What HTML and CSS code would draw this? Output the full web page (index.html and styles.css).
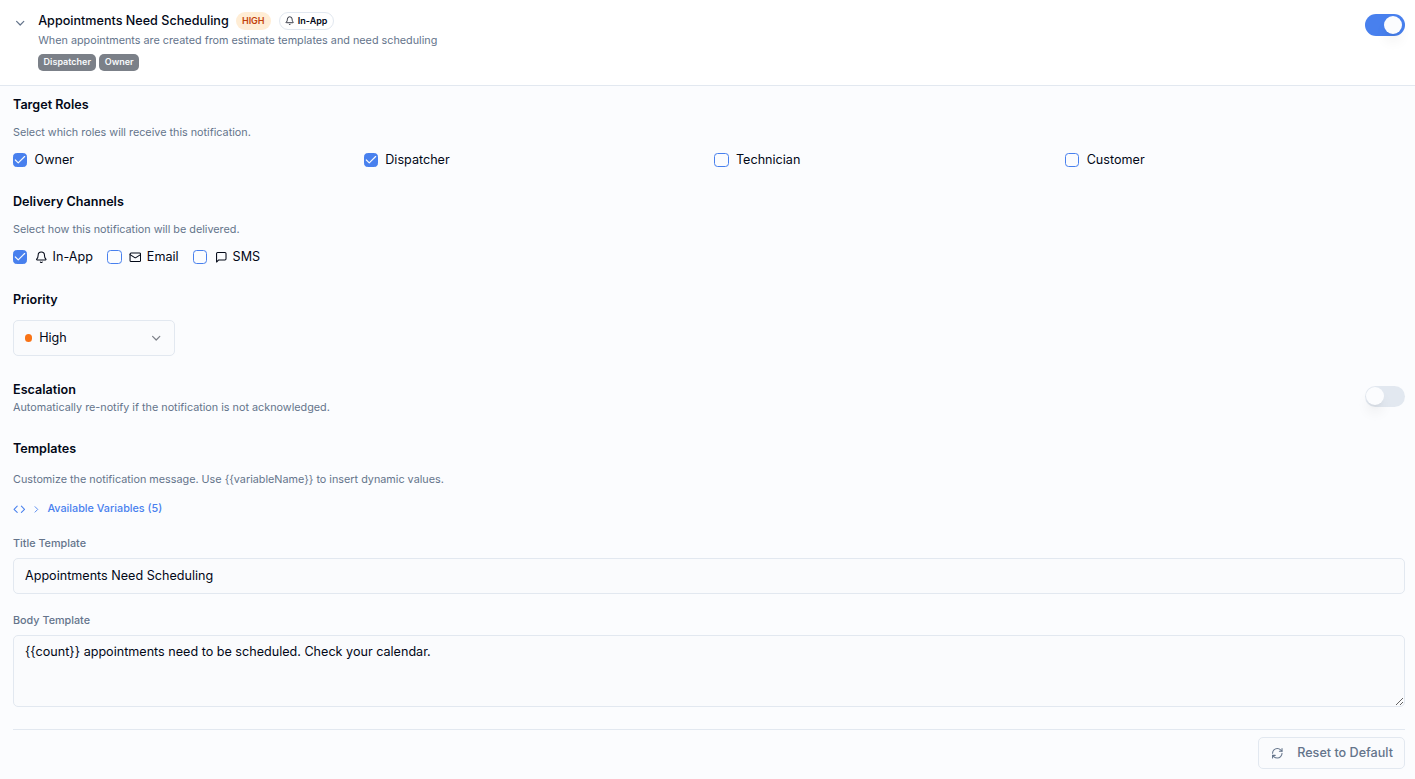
FILE: index.html
```html
<!DOCTYPE html>
<html lang="en">
<head>
  <meta charset="UTF-8">
  <meta name="viewport" content="width=device-width, initial-scale=1.0">
  <title>Notification Settings</title>
  <link rel="stylesheet" href="styles.css">
</head>
<body>
  <!-- Shared icons -->
  <svg class="icon-defs">
    <symbol id="icon-bell" viewBox="0 0 24 24">
      <path d="M10.268 21a2 2 0 0 0 3.464 0"/>
      <path d="M3.262 15.326A1 1 0 0 0 4 17h16a1 1 0 0 0 .74-1.673C19.41 13.956 18 12.499 18 8A6 6 0 0 0 6 8c0 4.499-1.411 5.956-2.738 7.326"/>
    </symbol>
    <symbol id="icon-chevron" viewBox="0 0 24 24">
      <path d="m6 9 6 6 6-6"/>
    </symbol>
  </svg>

  <header class="rule-header">
    <svg class="icon toggle-arrow"><use href="#icon-chevron"/></svg>
    <div class="rule-info">
      <div class="rule-title">
        <h1>Appointments Need Scheduling</h1>
        <span class="badge badge-high">HIGH</span>
        <span class="badge badge-outline"><svg class="icon"><use href="#icon-bell"/></svg>In-App</span>
      </div>
      <p class="hint">When appointments are created from estimate templates and need scheduling</p>
      <div class="role-badges">
        <span class="role-badge">Dispatcher</span>
        <span class="role-badge">Owner</span>
      </div>
    </div>
    <button class="switch on" role="switch" aria-checked="true" aria-label="Enabled"><span></span></button>
  </header>

  <main class="rule-body">
    <!-- Target Roles -->
    <section class="section">
      <h2>Target Roles</h2>
      <p class="hint">Select which roles will receive this notification.</p>
      <div class="roles">
        <label class="check"><input type="checkbox" checked>Owner</label>
        <label class="check"><input type="checkbox" checked>Dispatcher</label>
        <label class="check"><input type="checkbox">Technician</label>
        <label class="check"><input type="checkbox">Customer</label>
      </div>
    </section>

    <!-- Delivery Channels -->
    <section class="section delivery">
      <h2>Delivery Channels</h2>
      <p class="hint">Select how this notification will be delivered.</p>
      <div class="channels">
        <label class="check"><input type="checkbox" checked><svg class="icon"><use href="#icon-bell"/></svg>In-App</label>
        <label class="check"><input type="checkbox">
          <svg class="icon" viewBox="0 0 24 24"><rect x="2" y="4" width="20" height="16" rx="2"/><path d="m22 7-8.97 5.7a1.94 1.94 0 0 1-2.06 0L2 7"/></svg>Email</label>
        <label class="check"><input type="checkbox">
          <svg class="icon" viewBox="0 0 24 24"><path d="M21 15a2 2 0 0 1-2 2H7l-4 4V5a2 2 0 0 1 2-2h14a2 2 0 0 1 2 2z"/></svg>SMS</label>
      </div>
    </section>

    <!-- Priority -->
    <section class="section">
      <h2>Priority</h2>
      <button class="select">
        <span class="dot"></span>High
        <svg class="icon"><use href="#icon-chevron"/></svg>
      </button>
    </section>

    <!-- Escalation -->
    <section class="escalation">
      <div>
        <h2>Escalation</h2>
        <p class="hint">Automatically re-notify if the notification is not acknowledged.</p>
      </div>
      <button class="switch" role="switch" aria-checked="false" aria-label="Escalation"><span></span></button>
    </section>

    <!-- Templates -->
    <section class="templates">
      <h2>Templates</h2>
      <p class="hint">Customize the notification message. Use {{variableName}} to insert dynamic values.</p>
      <button class="variables">
        <svg class="icon code" viewBox="0 0 24 24"><path d="m16 18 6-6-6-6"/><path d="m8 6-6 6 6 6"/></svg>
        <svg class="icon arrow" viewBox="0 0 24 24"><path d="m9 18 6-6-6-6"/></svg>
        Available Variables (5)
      </button>
      <label class="field-label" for="titleTemplate">Title Template</label>
      <input class="field" type="text" id="titleTemplate" value="Appointments Need Scheduling">
      <label class="field-label" for="bodyTemplate">Body Template</label>
      <textarea class="field" id="bodyTemplate">{{count}} appointments need to be scheduled. Check your calendar.</textarea>
    </section>

    <footer class="actions">
      <button class="reset">
        <svg class="icon" viewBox="0 0 24 24"><path d="M3 12a9 9 0 0 1 9-9 9.75 9.75 0 0 1 6.74 2.74L21 8"/><path d="M21 3v5h-5"/><path d="M21 12a9 9 0 0 1-9 9 9.75 9.75 0 0 1-6.74-2.74L3 16"/><path d="M8 16H3v5"/></svg>
        Reset to Default
      </button>
    </footer>
  </main>
</body>
</html>
```
FILE: styles.css
```css
* {
  box-sizing: border-box;
}
body {
  margin: 0;
  font-family: Inter, sans-serif;
  font-size: 12.6px;
  line-height: 18px;
  color: #020817;
  background: #fbfcfe;
}
h1, h2, p {
  margin: 0;
}
h1, h2 {
  font-size: 12.6px;
  font-weight: 500;
  line-height: 18px;
}
h2 {
  font-weight: 600;
}
button, input, textarea {
  font: inherit;
  color: inherit;
}
button {
  padding: 0;
  border: none;
  background: none;
  cursor: pointer;
}
.icon-defs {
  display: none;
}
.icon {
  width: 12.6px;
  height: 12.6px;
  flex-shrink: 0;
  fill: none;
  stroke: currentColor;
  stroke-width: 2;
  stroke-linecap: round;
  stroke-linejoin: round;
}
.hint {
  font-size: 10.8px;
  line-height: 14px;
  color: #64748b;
}

/* Header */
.rule-header {
  display: flex;
  align-items: flex-start;
  height: 86px;
  padding: 12px 10px 0 13px;
  background: #fff;
  border-bottom: 1px solid #e2e8f0;
}
.toggle-arrow {
  width: 14.4px;
  height: 14.4px;
  margin-top: 4px;
  color: #64748b;
}
.rule-info {
  flex: 1;
  margin-left: 10.8px;
}
.rule-title {
  display: flex;
  align-items: center;
  height: 18px;
}
.rule-header .hint {
  margin-top: 4px;
}
.badge {
  display: flex;
  align-items: center;
  height: 18px;
  border-radius: 9px;
  font-size: 9px;
  font-weight: 600;
}
.badge-high {
  margin-left: 7.2px;
  padding: 0 6px;
  color: #c2410c;
  background: #ffedd5;
}
.badge-outline {
  margin-left: 8px;
  padding: 0 5.5px;
  gap: 3.2px;
  border: 1px solid #e2e8f0;
}
.badge-outline .icon {
  width: 9.5px;
  height: 9.5px;
}
.role-badges {
  display: flex;
  gap: 3px;
  margin-top: 6px;
}
.role-badge {
  height: 17px;
  padding: 0 5.4px;
  border-radius: 5px;
  font-size: 9px;
  font-weight: 600;
  line-height: 16px;
  color: #f8fafc;
  background: #7b8088;
}

/* Switch */
.switch {
  display: flex;
  align-items: center;
  width: 40px;
  height: 21.6px;
  padding: 0 3px 0 1px;
  border-radius: 11px;
  background: #e2e8f0;
}
.switch span {
  width: 18px;
  height: 18px;
  border-radius: 50%;
  background: #fbfcfe;
  box-shadow: 0 9px 14px -3px rgba(0, 0, 0, 0.1), 0 4px 5px -4px rgba(0, 0, 0, 0.1);
}
.switch.on {
  justify-content: flex-end;
  background: #4880ee;
}
.rule-header .switch {
  margin-top: 2px;
}

/* Body */
.rule-body {
  padding: 10px 10px 0 13px;
}
.section {
  margin-bottom: 24px;
}
.section.delivery {
  margin-bottom: 25px;
}
.section .hint {
  margin-top: 12px;
}
.roles {
  display: grid;
  grid-template-columns: repeat(4, 1fr);
  gap: 10.8px;
  margin-top: 11px;
}
.channels {
  display: flex;
  gap: 14.4px;
  margin-top: 11px;
}
.check {
  display: flex;
  align-items: center;
  height: 18px;
}
.check input {
  appearance: none;
  width: 14.4px;
  height: 14.4px;
  margin: 0 7.2px 0 0;
  border: 1px solid #4880ee;
  border-radius: 3.6px;
}
.check input:checked {
  background: #4880ee url("data:image/svg+xml,%3Csvg xmlns='http://www.w3.org/2000/svg' viewBox='0 0 24 24' fill='none' stroke='%23f8fafc' stroke-width='2' stroke-linecap='round' stroke-linejoin='round'%3E%3Cpath d='M20 6 9 17l-5-5'/%3E%3C/svg%3E") center / 14.4px no-repeat;
}
.check .icon {
  margin-right: 5.4px;
}
.select {
  display: flex;
  align-items: center;
  width: 162px;
  height: 36px;
  margin-top: 11px;
  padding: 0 11px;
  border: 1px solid #e2e8f0;
  border-radius: 5px;
  background: #fafbfd;
}
.dot {
  width: 7.2px;
  height: 7.2px;
  margin-right: 7px;
  border-radius: 50%;
  background: #f97316;
}
.select .icon {
  width: 14.4px;
  height: 14.4px;
  margin-left: auto;
  opacity: 0.5;
}
.escalation {
  display: flex;
  align-items: flex-start;
  justify-content: space-between;
  height: 35px;
  padding-top: 1px;
  margin-bottom: 25px;
}
.escalation .hint {
  margin-top: 2px;
}
.escalation .switch {
  margin-top: 4.7px;
}

/* Templates */
.templates {
  display: flex;
  flex-direction: column;
}
.templates .hint {
  margin-top: 15px;
}
.variables {
  display: flex;
  align-items: center;
  height: 18px;
  margin-top: 13px;
  font-size: 10.8px;
  font-weight: 500;
  color: #4880ee;
}
.variables .code {
  margin-right: 5px;
}
.variables .arrow {
  width: 10.8px;
  height: 10.8px;
  margin-right: 6px;
}
.field-label {
  margin: 18px 0 6px;
  font-size: 10.8px;
  font-weight: 500;
  line-height: 16px;
  color: #64748b;
}
.field + .field-label {
  margin-top: 19px;
}
.field {
  width: 100%;
  height: 36px;
  padding: 0 11px 2px;
  border: 1px solid #e2e8f0;
  border-radius: 5px;
  background: #fafbfd;
}
textarea.field {
  height: 72px;
  padding: 7px 11px;
}
.actions {
  display: flex;
  justify-content: flex-end;
  margin-top: 22px;
  padding-top: 7px;
  border-top: 1px solid #e2e8f0;
}
.reset {
  display: flex;
  align-items: center;
  height: 32px;
  padding: 0 11px 0 11.5px;
  border: 1px solid #e2e8f0;
  border-radius: 5px;
  font-weight: 500;
  color: #64748b;
  background: #fafbfd;
}
.reset .icon {
  margin-right: 13.8px;
}
```
